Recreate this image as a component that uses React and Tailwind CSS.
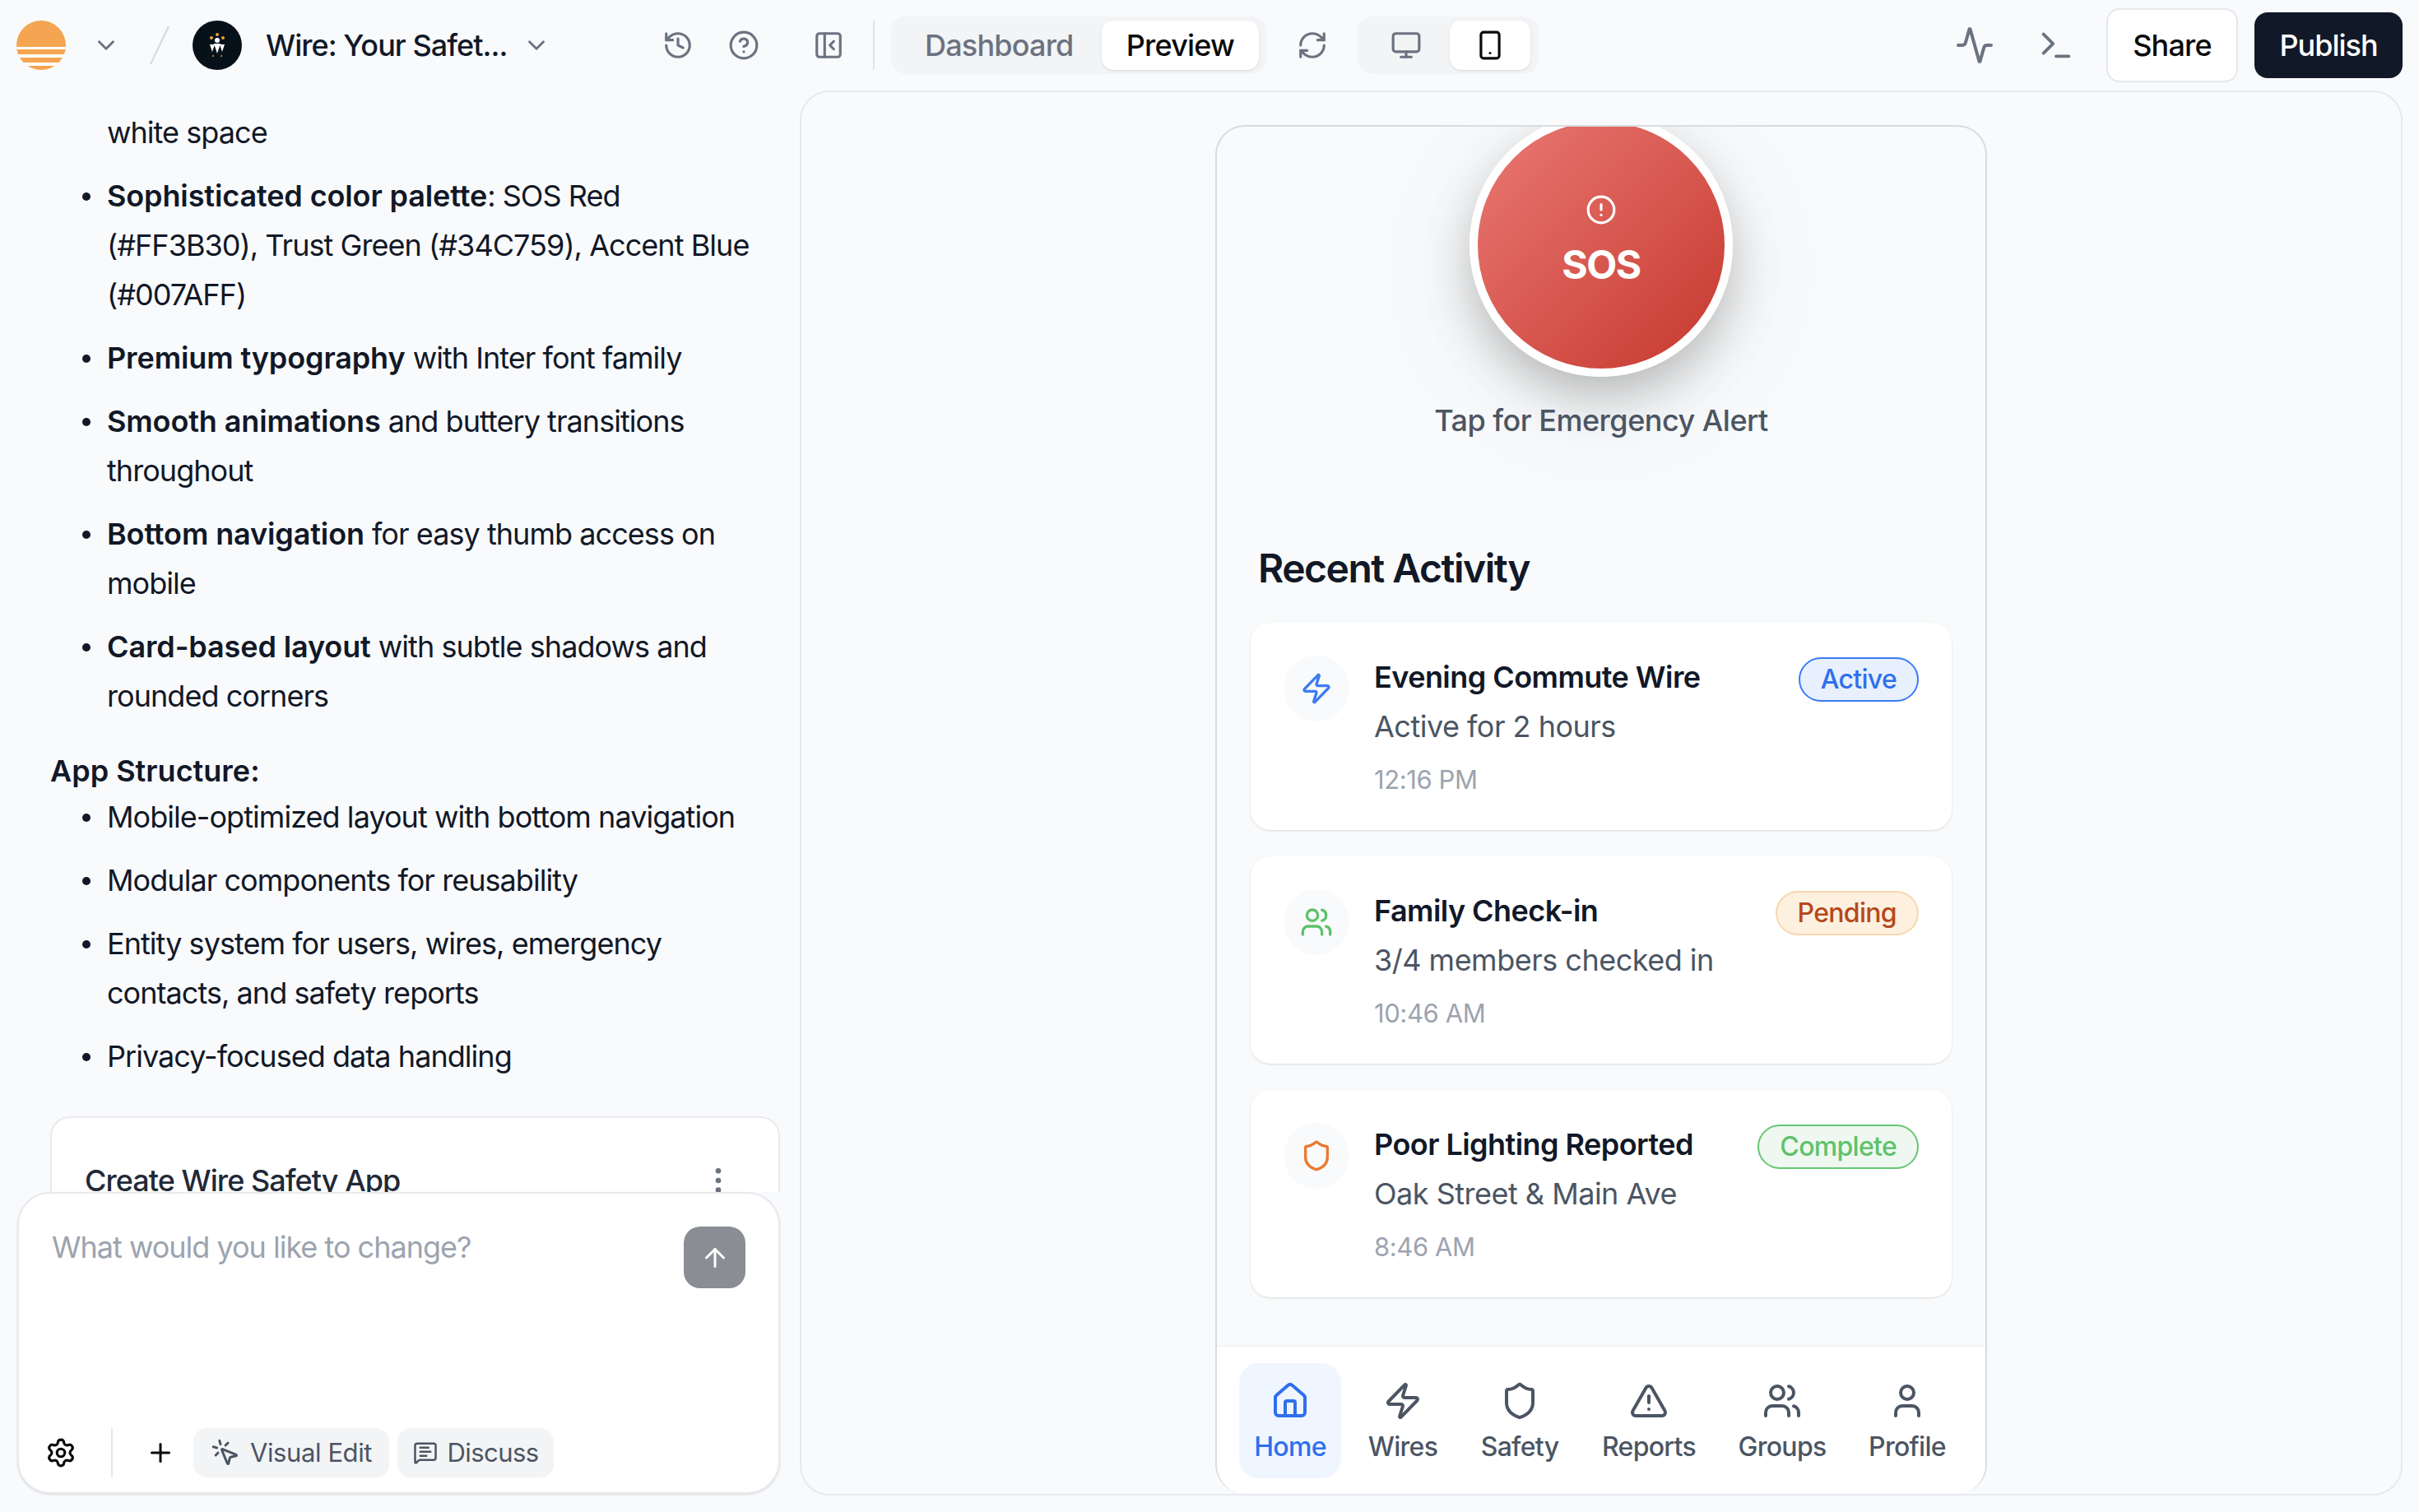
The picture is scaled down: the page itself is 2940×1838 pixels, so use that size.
import {
  Activity,
  ArrowUp,
  ChevronDown,
  CircleAlert,
  CircleHelp,
  History,
  House,
  MessageSquareText,
  Monitor,
  MoreVertical,
  MousePointerClick,
  PanelLeftClose,
  Plus,
  RefreshCw,
  Settings,
  Shield,
  Smartphone,
  Terminal,
  TriangleAlert,
  User,
  Users,
  Zap,
} from "lucide-react";

const activity = [
  {
    title: "Evening Commute Wire",
    sub: "Active for 2 hours",
    time: "12:16 PM",
    icon: <Zap className="w-[40px] h-[40px] text-[#3b7bf6]" strokeWidth={2} />,
    badge: "Active",
    badgeClass: "bg-[#e8f0fe] border-[#3b7bf6] text-[#2f6fed]",
  },
  {
    title: "Family Check-in",
    sub: "3/4 members checked in",
    time: "10:46 AM",
    icon: <Users className="w-[40px] h-[40px] text-[#5ec26a]" strokeWidth={2} />,
    badge: "Pending",
    badgeClass: "bg-[#fdf0df] border-[#f8d7ae] text-[#b5481c]",
  },
  {
    title: "Poor Lighting Reported",
    sub: "Oak Street & Main Ave",
    time: "8:46 AM",
    icon: <Shield className="w-[40px] h-[40px] text-[#ea7a30]" strokeWidth={2} />,
    badge: "Complete",
    badgeClass: "bg-[#eef8f0] border-[#66c673] text-[#5ec26a]",
  },
];

const navItems = [
  { label: "Home", icon: House, active: true, width: "w-[124px]" },
  { label: "Wires", icon: Zap, width: "w-[122px]" },
  { label: "Safety", icon: Shield, width: "w-[134px]" },
  { label: "Reports", icon: TriangleAlert, width: "w-[152px]" },
  { label: "Groups", icon: Users, width: "w-[144px]" },
  { label: "Profile", icon: User, width: "w-[132px]" },
];

const Logo = () => (
  <svg viewBox="0 0 60 60" className="w-[60px] h-[60px] shrink-0">
    <defs>
      <clipPath id="sun">
        <circle cx="30" cy="30" r="30" />
      </clipPath>
    </defs>
    <g clipPath="url(#sun)">
      <rect width="60" height="60" fill="#f5a552" />
      <rect y="32" width="60" height="3" fill="#fff" />
      <rect y="41" width="60" height="4" fill="#fff" />
      <rect y="51" width="60" height="4" fill="#fff" />
    </g>
  </svg>
);

const ProjectIcon = () => (
  <svg viewBox="0 0 60 60" className="w-[60px] h-[60px] shrink-0">
    <circle cx="30" cy="30" r="30" fill="#06111a" />
    <circle cx="23" cy="21" r="2" fill="#e9a23b" />
    <circle cx="30" cy="17" r="2" fill="#e9a23b" />
    <circle cx="37" cy="21" r="2" fill="#e9a23b" />
    <circle cx="30" cy="24" r="3" fill="#fff" />
    <path d="M21 29h6l-3 9zM33 29h6l-3 9zM26 28h8l-4 12z" fill="#fff" />
    <circle cx="25" cy="43" r="1" fill="#e9a23b" />
    <circle cx="35" cy="43" r="1" fill="#e9a23b" />
  </svg>
);

const Header = () => (
  <div className="h-[110px] shrink-0 flex items-center pl-[20px] pr-[20px]">
    <Logo />
    <ChevronDown className="ml-[32px] w-[34px] h-[34px] text-[#6b7280]" strokeWidth={2} />
    <svg viewBox="0 0 24 46" className="ml-[36px] w-[24px] h-[46px]">
      <path d="M23 0 1 46" stroke="#d1d9e4" strokeWidth="2" />
    </svg>
    <div className="ml-[28px]">
      <ProjectIcon />
    </div>
    <span className="ml-[29px] w-[294px] text-[36px] font-medium tracking-[-0.95px] text-[#111827] whitespace-nowrap">
      Wire: Your Safet...
    </span>
    <ChevronDown className="ml-[18px] w-[34px] h-[34px] text-[#6b7280]" strokeWidth={2} />
    <History className="ml-[136px] w-[38px] h-[38px] text-[#6b7280]" strokeWidth={2} />
    <CircleHelp className="ml-[42px] w-[38px] h-[38px] text-[#6b7280]" strokeWidth={2} />
    <PanelLeftClose className="ml-[65px] w-[38px] h-[38px] text-[#6b7280]" strokeWidth={2} />
    <div className="ml-[35px] w-[2px] h-[60px] bg-[#dfe3e8]" />
    <div className="ml-[20px] h-[70px] w-[456px] rounded-[18px] bg-[#f3f4f6] flex items-center p-[5px] pr-[9px] justify-between">
      <span className="pl-[36px] text-[36px] font-medium tracking-[-0.8px] text-[#6b7280]">Dashboard</span>
      <span className="w-[191px] h-[60px] rounded-[14px] bg-white shadow-sm flex items-center justify-center text-[36px] font-medium tracking-[-0.8px] text-[#0a0a0a]">
        Preview
      </span>
    </div>
    <RefreshCw className="ml-[37px] w-[38px] h-[38px] text-[#6b7280]" strokeWidth={2} />
    <div className="ml-[36px] h-[70px] w-[220px] rounded-[18px] bg-[#f3f4f6] flex items-center justify-between pl-[40px] pr-[10px]">
      <Monitor className="w-[38px] h-[38px] text-[#6b7280]" strokeWidth={2} />
      <span className="w-[98px] h-[60px] rounded-[14px] bg-white shadow-sm flex items-center justify-center">
        <Smartphone className="w-[38px] h-[38px] text-[#0a0a0a]" strokeWidth={2} />
      </span>
    </div>
    <div className="ml-auto flex items-center">
      <Activity className="w-[48px] h-[48px] text-[#6b7280]" strokeWidth={2} />
      <Terminal className="ml-[52px] w-[46px] h-[46px] text-[#6b7280]" strokeWidth={2} />
      <button className="ml-[38px] w-[160px] h-[90px] rounded-[16px] border-2 border-[#e5e7eb] bg-white text-[36px] font-medium tracking-[-0.8px] text-[#0a0a0a]">
        Share
      </button>
      <button className="ml-[20px] w-[180px] h-[80px] rounded-[16px] bg-[#111827] text-[36px] font-medium tracking-[-1px] text-white">
        Publish
      </button>
    </div>
  </div>
);

const Bullet = ({ children }) => (
  <li className="relative pl-[69px] pr-[18px] mb-[17px] before:content-[''] before:absolute before:left-[39px] before:top-[26px] before:w-[10px] before:h-[10px] before:rounded-full before:bg-[#111827]">
    {children}
  </li>
);

const Strong = ({ children }) => <b className="font-semibold tracking-[-0.12px]">{children}</b>;

const ChatPanel = () => (
  <div className="w-[972px] shrink-0 flex flex-col">
    <div className="flex-1 overflow-hidden pl-[61px] pr-[24px] text-[36px] leading-[60px] tracking-[-0.95px] text-[#111827] min-h-0">
      <div className="pl-[69px] mt-[21px] mb-[17px]">white space</div>
      <ul>
        <Bullet>
          <Strong>Sophisticated color palette</Strong>: SOS Red (#FF3B30), Trust Green (#34C759), Accent Blue (#007AFF)
        </Bullet>
        <Bullet>
          <Strong>Premium typography</Strong> with Inter font family
        </Bullet>
        <Bullet>
          <Strong>Smooth animations</Strong> and buttery transitions throughout
        </Bullet>
        <Bullet>
          <Strong>Bottom navigation</Strong> for easy thumb access on mobile
        </Bullet>
        <Bullet>
          <Strong>Card-based layout</Strong> with subtle shadows and rounded corners
        </Bullet>
      </ul>
      <div className="font-semibold tracking-normal mt-[35px] leading-[52px]">App Structure:</div>
      <ul>
        <Bullet>Mobile-optimized layout with bottom navigation</Bullet>
        <Bullet>Modular components for reusability</Bullet>
        <Bullet>Entity system for users, wires, emergency contacts, and safety reports</Bullet>
        <Bullet>Privacy-focused data handling</Bullet>
      </ul>
      <div className="mt-[43px] h-[200px] rounded-[24px] border-2 border-[#e8eaee] bg-white pl-[40px] pr-[63px] pt-[46px] flex justify-between">
        <span className="font-medium text-[#1f2937]">Create Wire Safety App</span>
        <MoreVertical className="mt-[10px] w-[40px] h-[40px] -mr-[10px] text-[#6b7280]" strokeWidth={2} />
      </div>
    </div>
    <div className="ml-[21px] mr-[24px] mb-[22px] h-[367px] shrink-0 rounded-[40px] border-2 border-[#e8eaee] bg-white shadow-sm flex flex-col justify-between pl-[40px] pr-[40px] pt-[40px] pb-[18px]">
      <div className="flex justify-between items-start">
        <span className="text-[36px] leading-[50px] tracking-[-1px] text-[#9ca3af]">What would you like to change?</span>
        <span className="w-[75px] h-[75px] rounded-[20px] bg-[#8a8d93] flex items-center justify-center">
          <ArrowUp className="w-[36px] h-[36px] text-white" strokeWidth={2} />
        </span>
      </div>
      <div className="flex items-center h-[60px] -ml-[8px]">
        <Settings className="w-[38px] h-[38px] text-[#0a0a0a]" strokeWidth={2} />
        <div className="ml-[42px] w-[2px] h-[60px] bg-[#e5e7eb]" />
        <Plus className="ml-[40px] w-[36px] h-[36px] text-[#0a0a0a]" strokeWidth={2} />
        <span className="ml-[22px] w-[238px] h-[60px] rounded-[16px] bg-[#f3f4f6] flex items-center justify-center gap-[12px] text-[31px] tracking-[-0.4px] text-[#4b5563]">
          <MousePointerClick className="w-[36px] h-[36px]" strokeWidth={2} />
          Visual Edit
        </span>
        <span className="ml-[10px] w-[190px] h-[60px] rounded-[16px] bg-[#f3f4f6] flex items-center justify-center gap-[12px] text-[31px] tracking-[-0.6px] text-[#4b5563]">
          <MessageSquareText className="w-[30px] h-[30px]" strokeWidth={2} />
          Discuss
        </span>
      </div>
    </div>
  </div>
);

const ActivityCard = ({ item }) => (
  <div className="h-[252px] rounded-[24px] bg-white shadow-sm p-[40px] flex items-start">
    <div className="w-[80px] h-[80px] rounded-full bg-[#f9fafb] flex items-center justify-center shrink-0">
      {item.icon}
    </div>
    <div className="ml-[30px] flex-1 min-w-0 -mt-[2px]">
      <div className="text-[36px] leading-[56px] font-semibold tracking-[-0.55px] text-[#111827]">{item.title}</div>
      <div className="mt-[4px] text-[36px] leading-[56px] tracking-[-0.5px] text-[#4b5563]">{item.sub}</div>
      <div className="mt-[9px] text-[31px] leading-[56px] tracking-[-0.4px] text-[#9ca3af]">{item.time}</div>
    </div>
    <span
      className={`mt-[2px] h-[54px] px-[25px] rounded-full border-2 text-[32px] font-medium tracking-[-0.7px] flex items-center shrink-0 ${item.badgeClass}`}
    >
      {item.badge}
    </span>
  </div>
);

const PhonePreview = () => (
  <div className="w-[938px] mt-[40px] rounded-t-[36px] rounded-b-[36px] border-2 border-[#d9dce1] border-b-0 bg-[#f9fafb] overflow-hidden flex flex-col">
    <div className="flex-1 min-h-0 overflow-hidden">
      <div className="flex flex-col items-center -mt-[16px]">
        <div className="w-[320px] h-[320px] rounded-full border-[10px] border-white bg-linear-to-br from-[#ea7874] to-[#c5362c] shadow-[0_25px_60px_-5px_rgba(0,0,0,0.25),0_30px_130px_20px_rgba(0,0,0,0.05)] flex flex-col items-center pt-[88px]">
          <CircleAlert className="w-[38px] h-[38px] text-white" strokeWidth={2} />
          <span className="mt-[18px] text-[48px] leading-[60px] font-bold tracking-[-1.5px] text-white">SOS</span>
        </div>
        <div className="mt-[28px] text-[36px] leading-[50px] font-medium tracking-[-0.5px] text-[#4b5563]">
          Tap for Emergency Alert
        </div>
      </div>
      <div className="mt-[125px] pl-[50px] text-[48px] leading-[60px] font-semibold tracking-[-1.5px] text-[#111827]">
        Recent Activity
      </div>
      <div className="mt-[36px] mx-[41px] flex flex-col gap-[32px]">
        {activity.map((item) => (
          <ActivityCard key={item.title} item={item} />
        ))}
      </div>
    </div>
    <div className="h-[181px] shrink-0 bg-white border-t-2 border-[#f3f4f6] flex items-start gap-[14px] pt-[20px] pl-[27px]">
      {navItems.map((nav, idx) => {
        const Icon = nav.icon;
        return (
          <div
            key={idx}
            className={`${nav.width} h-[140px] rounded-[24px] flex flex-col items-center pt-[22px] ${
              nav.active ? "bg-[#eff6ff] text-[#2f6fed]" : "text-[#4b5563]"
            }`}
          >
            <Icon className="w-[48px] h-[48px]" strokeWidth={2} />
            <span className="mt-[10px] text-[32px] leading-[44px] font-medium tracking-[-0.7px]">{nav.label}</span>
          </div>
        );
      })}
    </div>
  </div>
);

export default function App() {
  return (
    <div className="w-[2940px] h-[1838px] bg-[#f9fafc] flex flex-col overflow-hidden font-[Inter,sans-serif]">
      <Header />
      <div className="flex-1 min-h-0 flex">
        <ChatPanel />
        <div className="flex-1 mr-[20px] mb-[20px] rounded-[36px] border-2 border-[#e5eaf0] flex justify-center min-h-0">
          <PhonePreview />
        </div>
      </div>
    </div>
  );
}
